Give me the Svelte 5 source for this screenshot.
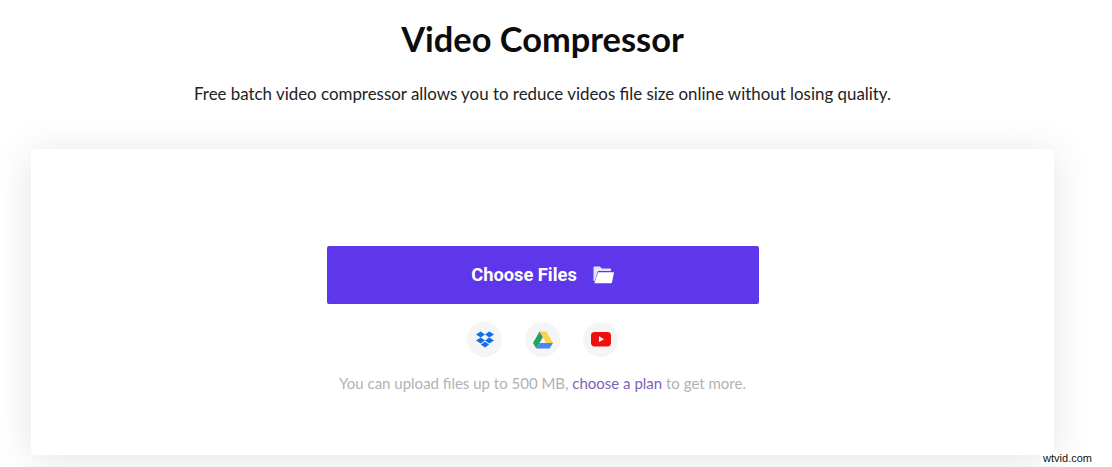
<script>
  const providers = ['Dropbox', 'Google Drive', 'YouTube'];
</script>

<main class="page">
  <h1>Video Compressor</h1>
  <p class="sub">Free batch video compressor allows you to reduce videos file size online without losing quality.</p>
  <section class="card">
    <button class="choose" type="button">
      <span class="label">Choose Files</span>
      <svg width="21" height="18" viewBox="0 0 21 18" aria-hidden="true">
        <path fill="#fff" opacity="0.85" d="M0.5 1.5C0.5 0.9 0.9 0.5 1.5 0.5H7L8.8 2.6H17C17.6 2.6 18 3 18 3.6V5H5L1.8 15H1.5C0.9 15 0.5 14.6 0.5 14Z"/>
        <path fill="#fff" d="M5.2 6.2H20.2C20.7 6.2 21 6.6 20.9 7.1L19 16.4C18.9 16.9 18.5 17.2 18 17.2H1.4Z"/>
      </svg>
    </button>
    <div class="sources">
      {#each providers as name}
        <div class="source" title={name}>
          {#if name === 'Dropbox'}
            <svg width="18" height="17" viewBox="0 0 18 17" aria-label={name}>
              <path fill="#0f6fe8" d="M4.7 0.5 0 3.5l4.7 3L9 3.5Zm8.6 0L9 3.5l4.3 3 4.7-3ZM0 9.5l4.7 3L9 9.5l-4.3-3Zm13.3-3L9 9.5l4.3 3 4.7-3ZM4.8 13.6 9 16.5l4.2-2.9L9 10.7Z"/>
            </svg>
          {:else if name === 'Google Drive'}
            <svg width="20" height="18" viewBox="0 0 20 18" aria-label={name}>
              <path fill="#1fa463" d="M6.6 0.5 0 12l3.3 5.5L10 6Z"/>
              <path fill="#ffd04b" d="M6.6 0.5h6.8L20 12h-6.7Z"/>
              <path fill="#4688f1" d="M6.6 12H20l-3.3 5.5H3.3Z"/>
            </svg>
          {:else}
            <svg width="20" height="15" viewBox="0 0 20 15" aria-label={name}>
              <rect width="20" height="14.4" rx="3.6" fill="#ee0f0f"/>
              <path fill="#fff" d="M8 4.3 13 7.2 8 10.1Z"/>
            </svg>
          {/if}
        </div>
      {/each}
    </div>
    <p class="note">You can upload files up to 500 MB, <a href="#plan">choose a plan</a> to get more.</p>
  </section>
  <span class="mark">wtvid.com</span>
</main>

<style>
  :global(body) {
    margin: 0;
    background: #fff;
  }
  .page {
    height: 467px;
    box-sizing: border-box;
    padding: 17px 58px 0 31px;
    display: flex;
    flex-direction: column;
    align-items: stretch;
    font-family: "Lato", "Open Sans", sans-serif;
    overflow: hidden;
    position: relative;
  }
  h1 {
    margin: 0;
    text-align: center;
    font-size: 34.4px;
    line-height: 44px;
    font-weight: 700;
    color: #0c0c0c;
  }
  .sub {
    margin: 22px 0 0;
    text-align: center;
    font-size: 16.9px;
    line-height: 22px;
    color: #222;
  }
  .card {
    margin-top: 44px;
    height: 306px;
    box-sizing: border-box;
    padding-top: 97px;
    background: #fff;
    border-radius: 5px;
    box-shadow: 0 4px 40px rgba(0, 0, 0, 0.11);
    display: flex;
    flex-direction: column;
    align-items: center;
  }
  .choose {
    width: 432px;
    height: 58px;
    border: 0;
    border-radius: 2px;
    background: #5f37ea;
    color: #fff;
    font: 700 18.3px "Roboto", sans-serif;
    display: flex;
    align-items: center;
    justify-content: center;
    gap: 16px;
    padding: 0;
  }
  .label {
    margin-top: -2px;
  }
  .sources {
    margin-top: 18px;
    display: flex;
    gap: 23px;
  }
  .source {
    width: 35px;
    height: 35px;
    border-radius: 50%;
    background: #f5f5f6;
    display: flex;
    align-items: center;
    justify-content: center;
  }
  .note {
    margin: 16px 0 0;
    font-size: 15px;
    line-height: 20px;
    color: #b2b2b2;
  }
  .note a {
    color: #7c5fba;
    text-decoration: none;
  }
  .mark {
    position: absolute;
    right: 20px;
    bottom: 3px;
    font: 11px "Liberation Sans", sans-serif;
    color: #111;
    background: #fff;
    padding: 0 0 0 2px;
  }
</style>
